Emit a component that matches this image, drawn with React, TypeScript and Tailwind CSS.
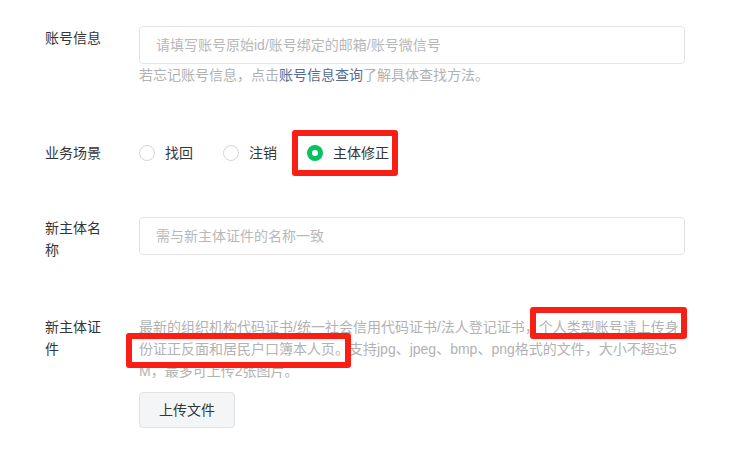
import React from "react";

const font = {
  fontFamily: '"Liberation Sans", "Noto Sans CJK SC", sans-serif',
};

function Radio({ label, checked }: { label: string; checked?: boolean }) {
  return (
    <div className="flex items-center h-[22px]">
      {checked ? (
        <span className="w-[16px] h-[16px] rounded-full border-[5px] border-[#07c160] bg-white box-border" />
      ) : (
        <span className="w-[16px] h-[16px] rounded-full border border-[#d4d4da] bg-white box-border" />
      )}
      <span className="ml-[10px] text-[14px] leading-[22px] text-[#353535]">{label}</span>
    </div>
  );
}

export default function App() {
  return (
    <div
      className="relative w-[735px] h-[460px] bg-white pt-[26px] pl-[45px] pr-[50px] text-[14px] text-[#353535]"
      style={font}
    >
      {/* Row 1 */}
      <div className="flex items-start">
        <div className="w-[60px] mr-[34px] shrink-0 leading-[22px] pt-[1px]">账号信息</div>
        <div className="flex-1">
          <input
            className="w-full h-[38px] border border-[#e5e5e5] rounded-[4px] pl-[16px] text-[14px] outline-none placeholder:text-[#b8b8b8]"
            placeholder="请填写账号原始id/账号绑定的邮箱/账号微信号"
            style={font}
          />
          <div className="leading-[22px] text-[#b2b2b2]">
            若忘记账号信息，点击<span className="text-[#576b95]">账号信息查询</span>了解具体查找方法。
          </div>
        </div>
      </div>

      {/* Row 2 */}
      <div className="flex items-center mt-[56px]">
        <div className="w-[60px] mr-[34px] shrink-0 leading-[22px]">业务场景</div>
        <div className="flex items-center gap-[30px]">
          <Radio label="找回" />
          <Radio label="注销" />
          <Radio label="主体修正" checked />
        </div>
      </div>

      {/* Row 3 */}
      <div className="flex items-start mt-[53px]">
        <div className="w-[60px] mr-[34px] shrink-0 leading-[22px]">新主体名称</div>
        <div className="flex-1">
          <input
            className="w-full h-[38px] border border-[#e5e5e5] rounded-[4px] pl-[16px] text-[14px] outline-none placeholder:text-[#b8b8b8]"
            placeholder="需与新主体证件的名称一致"
            style={font}
          />
        </div>
      </div>

      {/* Row 4 */}
      <div className="flex items-start mt-[55px]">
        <div className="w-[60px] mr-[34px] shrink-0 leading-[22px]">新主体证件</div>
        <div className="flex-1">
          <p className="leading-[22px] text-[#b2b2b2] break-all">
            最新的组织机构代码证书/统一社会信用代码证书/法人登记证书，个人类型账号请上传身份证正反面和居民户口簿本人页。支持jpg、jpeg、bmp、png格式的文件，大小不超过5M，最多可上传2张图片。
          </p>
          <button
            className="mt-[10px] w-[96px] h-[36px] flex items-center justify-center border border-[#e2e2e2] rounded-[4px] bg-[#f4f5f7] text-[14px] text-[#353535]"
            style={font}
          >
            上传文件
          </button>
        </div>
      </div>

      {/* Annotation boxes */}
      <div className="absolute left-[292px] top-[130px] w-[106px] h-[46px] border-[6px] border-[#fa1f15] rounded-[3px]" />
      <div className="absolute left-[530px] top-[307px] w-[157px] h-[32px] border-[6px] border-[#fa1f15] rounded-[3px]" />
      <div className="absolute left-[126px] top-[333px] w-[225px] h-[35px] border-[6px] border-[#fa1f15] rounded-[3px]" />
    </div>
  );
}
